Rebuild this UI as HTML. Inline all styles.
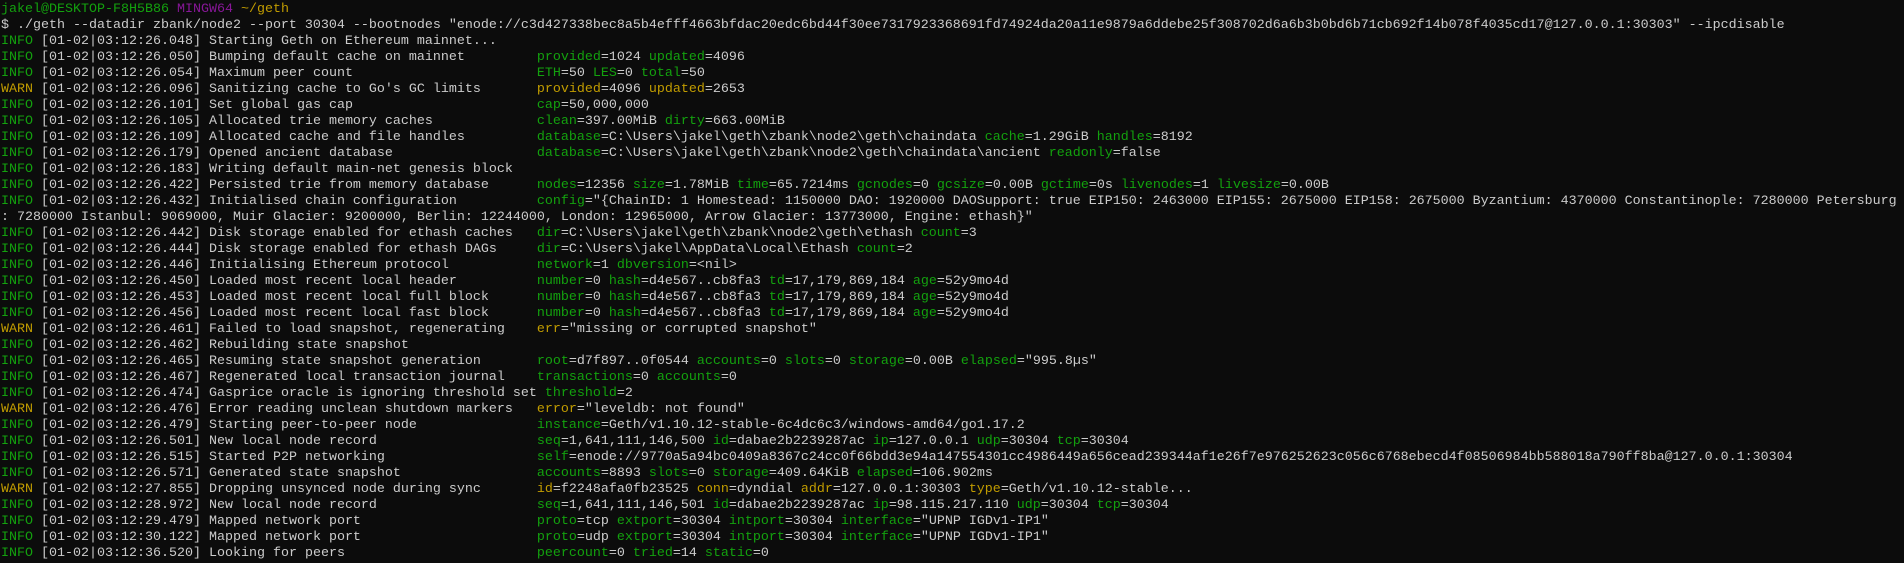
<!DOCTYPE html>
<html><head><meta charset="utf-8">
<style>
html,body{margin:0;padding:0;background:#0c0c0c;}
body{width:1904px;height:563px;overflow:hidden;}
pre{margin:0;padding:2px 0 0 1px;font-family:"Liberation Mono",monospace;font-size:13.333px;line-height:16px;color:#cccccc;white-space:pre;}
.g{color:#13a10e}.y{color:#c19c00}.p{color:#881798}
.m{display:inline-block;min-width:40ch;margin-right:1ch}
</style></head><body><pre><span class="g">jakel@DESKTOP-F8H5B86</span> <span class="p">MINGW64</span> <span class="y">~/geth</span>
$ ./geth --datadir zbank/node2 --port 30304 --bootnodes "enode://c3d427338bec8a5b4efff4663bfdac20edc6bd44f30ee7317923368691fd74924da20a11e9879a6ddebe25f308702d6a6b3b0bd6b71cb692f14b078f4035cd17@127.0.0.1:30303" --ipcdisable
<span class="g">INFO</span> [01-02|03:12:26.048] Starting Geth on Ethereum mainnet...
<span class="g">INFO</span> [01-02|03:12:26.050] <span class="m">Bumping default cache on mainnet</span><span class="g">provided</span>=1024 <span class="g">updated</span>=4096
<span class="g">INFO</span> [01-02|03:12:26.054] <span class="m">Maximum peer count</span><span class="g">ETH</span>=50 <span class="g">LES</span>=0 <span class="g">total</span>=50
<span class="y">WARN</span> [01-02|03:12:26.096] <span class="m">Sanitizing cache to Go's GC limits</span><span class="y">provided</span>=4096 <span class="y">updated</span>=2653
<span class="g">INFO</span> [01-02|03:12:26.101] <span class="m">Set global gas cap</span><span class="g">cap</span>=50,000,000
<span class="g">INFO</span> [01-02|03:12:26.105] <span class="m">Allocated trie memory caches</span><span class="g">clean</span>=397.00MiB <span class="g">dirty</span>=663.00MiB
<span class="g">INFO</span> [01-02|03:12:26.109] <span class="m">Allocated cache and file handles</span><span class="g">database</span>=C:\Users\jakel\geth\zbank\node2\geth\chaindata <span class="g">cache</span>=1.29GiB <span class="g">handles</span>=8192
<span class="g">INFO</span> [01-02|03:12:26.179] <span class="m">Opened ancient database</span><span class="g">database</span>=C:\Users\jakel\geth\zbank\node2\geth\chaindata\ancient <span class="g">readonly</span>=false
<span class="g">INFO</span> [01-02|03:12:26.183] Writing default main-net genesis block
<span class="g">INFO</span> [01-02|03:12:26.422] <span class="m">Persisted trie from memory database</span><span class="g">nodes</span>=12356 <span class="g">size</span>=1.78MiB <span class="g">time</span>=65.7214ms <span class="g">gcnodes</span>=0 <span class="g">gcsize</span>=0.00B <span class="g">gctime</span>=0s <span class="g">livenodes</span>=1 <span class="g">livesize</span>=0.00B
<span class="g">INFO</span> [01-02|03:12:26.432] <span class="m">Initialised chain configuration</span><span class="g">config</span>="{ChainID: 1 Homestead: 1150000 DAO: 1920000 DAOSupport: true EIP150: 2463000 EIP155: 2675000 EIP158: 2675000 Byzantium: 4370000 Constantinople: 7280000 Petersburg
: 7280000 Istanbul: 9069000, Muir Glacier: 9200000, Berlin: 12244000, London: 12965000, Arrow Glacier: 13773000, Engine: ethash}"
<span class="g">INFO</span> [01-02|03:12:26.442] <span class="m">Disk storage enabled for ethash caches</span><span class="g">dir</span>=C:\Users\jakel\geth\zbank\node2\geth\ethash <span class="g">count</span>=3
<span class="g">INFO</span> [01-02|03:12:26.444] <span class="m">Disk storage enabled for ethash DAGs</span><span class="g">dir</span>=C:\Users\jakel\AppData\Local\Ethash <span class="g">count</span>=2
<span class="g">INFO</span> [01-02|03:12:26.446] <span class="m">Initialising Ethereum protocol</span><span class="g">network</span>=1 <span class="g">dbversion</span>=&lt;nil&gt;
<span class="g">INFO</span> [01-02|03:12:26.450] <span class="m">Loaded most recent local header</span><span class="g">number</span>=0 <span class="g">hash</span>=d4e567..cb8fa3 <span class="g">td</span>=17,179,869,184 <span class="g">age</span>=52y9mo4d
<span class="g">INFO</span> [01-02|03:12:26.453] <span class="m">Loaded most recent local full block</span><span class="g">number</span>=0 <span class="g">hash</span>=d4e567..cb8fa3 <span class="g">td</span>=17,179,869,184 <span class="g">age</span>=52y9mo4d
<span class="g">INFO</span> [01-02|03:12:26.456] <span class="m">Loaded most recent local fast block</span><span class="g">number</span>=0 <span class="g">hash</span>=d4e567..cb8fa3 <span class="g">td</span>=17,179,869,184 <span class="g">age</span>=52y9mo4d
<span class="y">WARN</span> [01-02|03:12:26.461] <span class="m">Failed to load snapshot, regenerating</span><span class="y">err</span>="missing or corrupted snapshot"
<span class="g">INFO</span> [01-02|03:12:26.462] Rebuilding state snapshot
<span class="g">INFO</span> [01-02|03:12:26.465] <span class="m">Resuming state snapshot generation</span><span class="g">root</span>=d7f897..0f0544 <span class="g">accounts</span>=0 <span class="g">slots</span>=0 <span class="g">storage</span>=0.00B <span class="g">elapsed</span>="995.8µs"
<span class="g">INFO</span> [01-02|03:12:26.467] <span class="m">Regenerated local transaction journal</span><span class="g">transactions</span>=0 <span class="g">accounts</span>=0
<span class="g">INFO</span> [01-02|03:12:26.474] <span class="m">Gasprice oracle is ignoring threshold set</span><span class="g">threshold</span>=2
<span class="y">WARN</span> [01-02|03:12:26.476] <span class="m">Error reading unclean shutdown markers</span><span class="y">error</span>="leveldb: not found"
<span class="g">INFO</span> [01-02|03:12:26.479] <span class="m">Starting peer-to-peer node</span><span class="g">instance</span>=Geth/v1.10.12-stable-6c4dc6c3/windows-amd64/go1.17.2
<span class="g">INFO</span> [01-02|03:12:26.501] <span class="m">New local node record</span><span class="g">seq</span>=1,641,111,146,500 <span class="g">id</span>=dabae2b2239287ac <span class="g">ip</span>=127.0.0.1 <span class="g">udp</span>=30304 <span class="g">tcp</span>=30304
<span class="g">INFO</span> [01-02|03:12:26.515] <span class="m">Started P2P networking</span><span class="g">self</span>=enode://9770a5a94bc0409a8367c24cc0f66bdd3e94a147554301cc4986449a656cead239344af1e26f7e976252623c056c6768ebecd4f08506984bb588018a790ff8ba@127.0.0.1:30304
<span class="g">INFO</span> [01-02|03:12:26.571] <span class="m">Generated state snapshot</span><span class="g">accounts</span>=8893 <span class="g">slots</span>=0 <span class="g">storage</span>=409.64KiB <span class="g">elapsed</span>=106.902ms
<span class="y">WARN</span> [01-02|03:12:27.855] <span class="m">Dropping unsynced node during sync</span><span class="y">id</span>=f2248afa0fb23525 <span class="y">conn</span>=dyndial <span class="y">addr</span>=127.0.0.1:30303 <span class="y">type</span>=Geth/v1.10.12-stable...
<span class="g">INFO</span> [01-02|03:12:28.972] <span class="m">New local node record</span><span class="g">seq</span>=1,641,111,146,501 <span class="g">id</span>=dabae2b2239287ac <span class="g">ip</span>=98.115.217.110 <span class="g">udp</span>=30304 <span class="g">tcp</span>=30304
<span class="g">INFO</span> [01-02|03:12:29.479] <span class="m">Mapped network port</span><span class="g">proto</span>=tcp <span class="g">extport</span>=30304 <span class="g">intport</span>=30304 <span class="g">interface</span>="UPNP IGDv1-IP1"
<span class="g">INFO</span> [01-02|03:12:30.122] <span class="m">Mapped network port</span><span class="g">proto</span>=udp <span class="g">extport</span>=30304 <span class="g">intport</span>=30304 <span class="g">interface</span>="UPNP IGDv1-IP1"
<span class="g">INFO</span> [01-02|03:12:36.520] <span class="m">Looking for peers</span><span class="g">peercount</span>=0 <span class="g">tried</span>=14 <span class="g">static</span>=0
</pre></body></html>
